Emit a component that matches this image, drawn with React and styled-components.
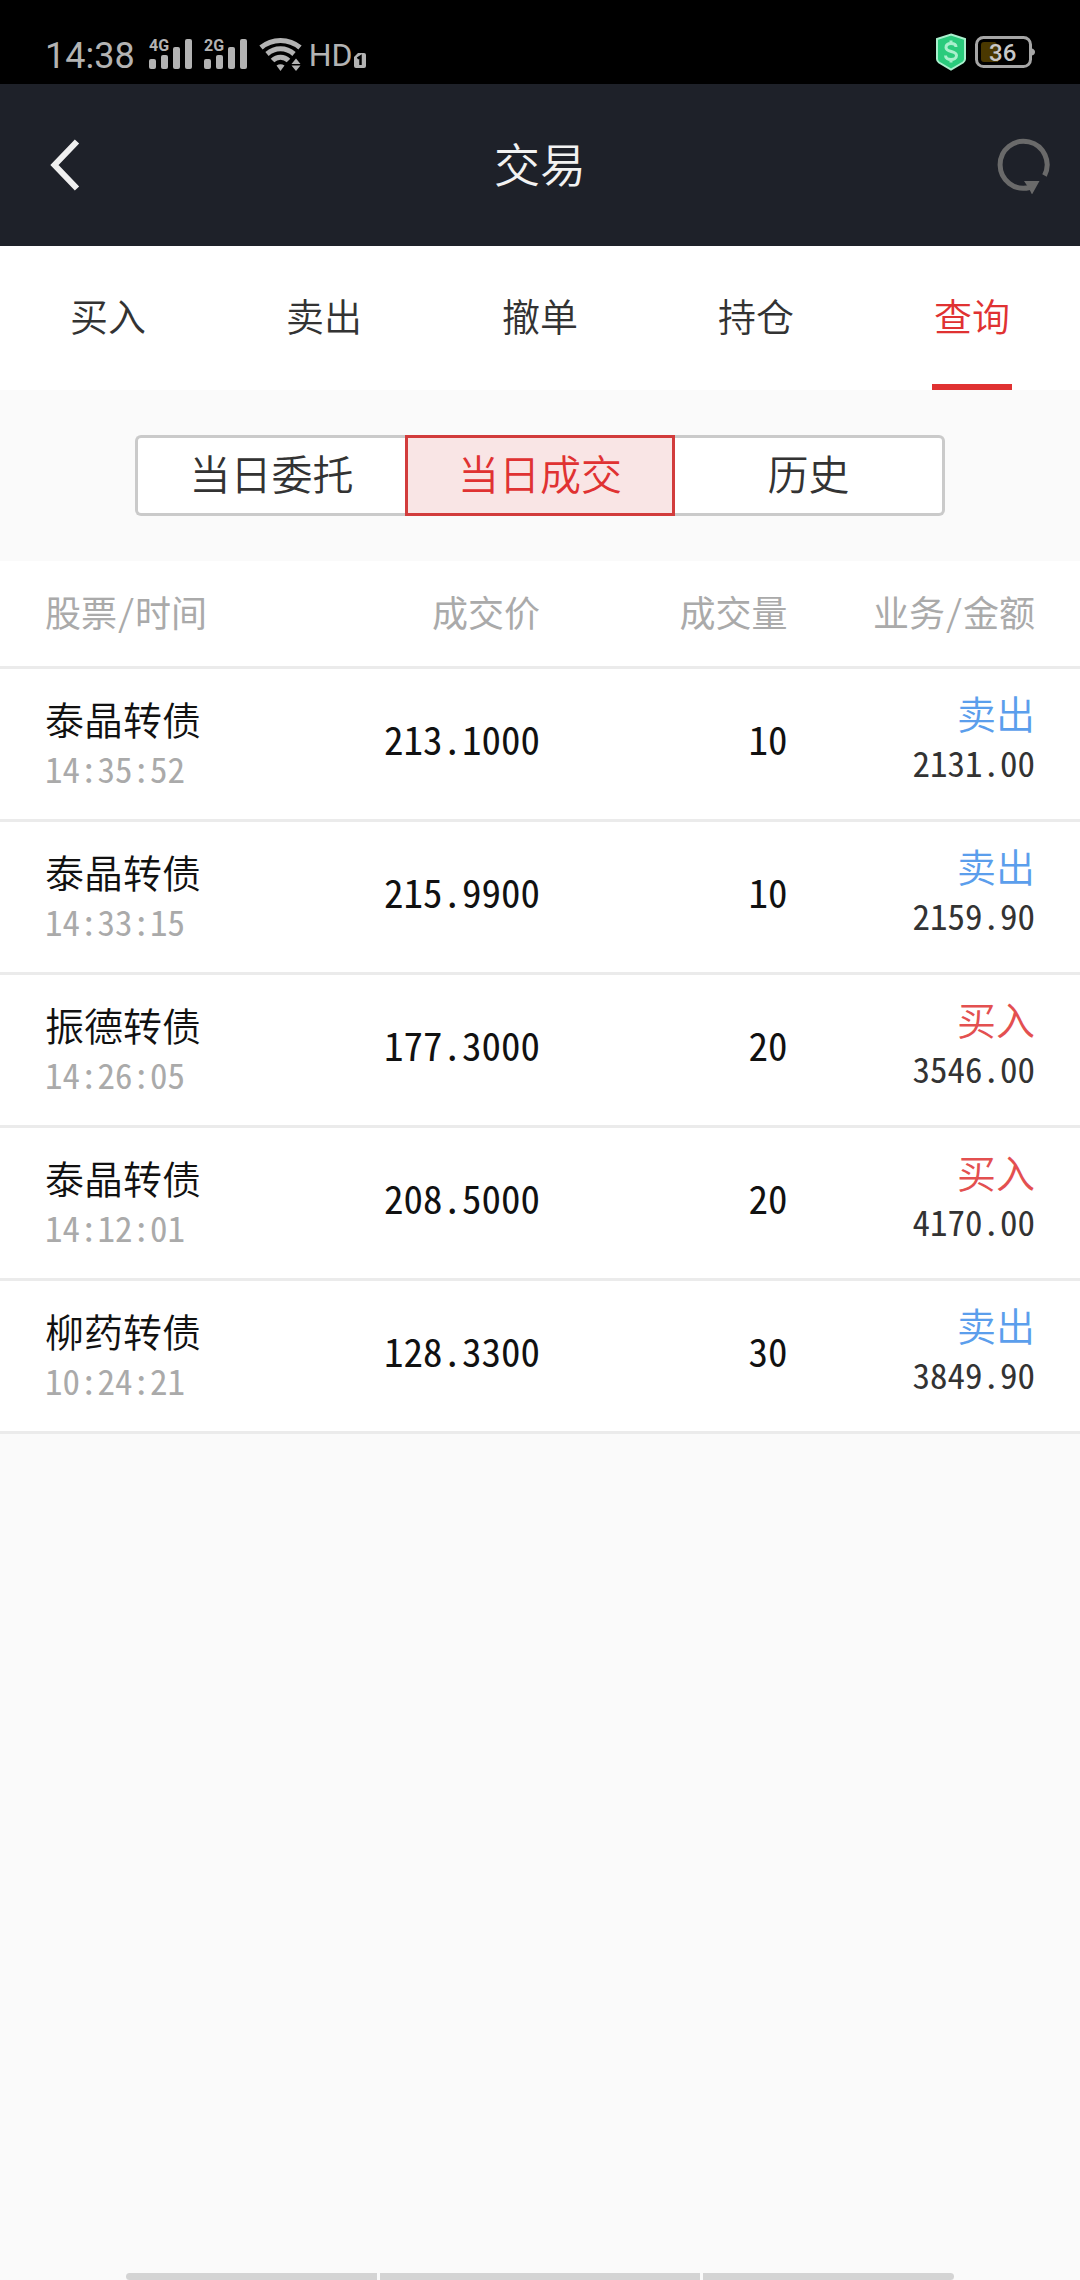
import React, { useState } from "react"
import styled, { createGlobalStyle } from "styled-components"

const tabs = ["买入", "卖出", "撤单", "持仓", "查询"]
const ranges = ["当日委托", "当日成交", "历史"]

const trades = [
  { name: "泰晶转债", time: "14:35:52", price: "213.1000", volume: 10, side: "卖出", amount: "2131.00" },
  { name: "泰晶转债", time: "14:33:15", price: "215.9900", volume: 10, side: "卖出", amount: "2159.90" },
  { name: "振德转债", time: "14:26:05", price: "177.3000", volume: 20, side: "买入", amount: "3546.00" },
  { name: "泰晶转债", time: "14:12:01", price: "208.5000", volume: 20, side: "买入", amount: "4170.00" },
  { name: "柳药转债", time: "10:24:21", price: "128.3300", volume: 30, side: "卖出", amount: "3849.90" }
]

const Signal = ({ label }) => (
  <svg width="44" height="34" viewBox="0 0 44 34" fill="#b3b3b3">
    <text x="0" y="14" fontFamily="Roboto, sans-serif" fontSize="16" fontWeight="700">{label}</text>
    <rect x="0" y="22" width="7" height="10" rx="2" />
    <rect x="12" y="18" width="7" height="14" rx="2" />
    <rect x="24" y="10" width="7" height="22" rx="2" />
    <rect x="36" y="2" width="7" height="30" rx="2" />
  </svg>
)

const Wifi = () => (
  <svg width="44" height="34" viewBox="0 0 44 34" fill="none" stroke="#b3b3b3" strokeWidth="5">
    <path d="M2 10.5C13 1 30 1 41 10.5" />
    <path d="M8 17C16 10 27 10 35 17" />
    <path d="M13.5 23.5C18 19 25 19 29.5 23.5" />
    <path d="M17.5 28.5Q21.5 26 25.5 28.5L21.5 34Z" fill="#b3b3b3" stroke="none" />
    <path d="M32.5 27L37 21.5L41.5 27ZM32.5 28.5H41.5L37 34Z" fill="#b3b3b3" stroke="none" />
  </svg>
)

const SimBadge = () => (
  <svg width="12" height="18" viewBox="0 0 12 18">
    <path d="M4 0H10Q12 0 12 2V13Q12 15 10 15H2Q0 15 0 13V4Z" fill="#b3b3b3" />
    <path d="M3.500 5.500L6.500 3.500V12" fill="none" stroke="#000" strokeWidth="2.500" />
  </svg>
)

const Shield = () => (
  <svg width="30" height="38" viewBox="0 0 30 38">
    <path d="M15 1.500L29 6V26Q29 28 27 29.500L15 36.500L3 29.500Q1 28 1 26V6Z" fill="#2acb7c" stroke="#a9f0cd" strokeWidth="2" />
    <path
      d="M20 14C20 11.500 18 10.500 15 10.500S10 12 10 14.500C10 20 20.500 17 20.500 22.500C20.500 25 18 26.500 15 26.500S9.500 25 9.500 22.500M15 7.500V11M15 26V29.500"
      fill="none"
      stroke="#a9f0cd"
      strokeWidth="3"
    />
  </svg>
)

const Battery = ({ level }) => (
  <svg width="60" height="34" viewBox="0 0 60 34">
    <rect x="1.500" y="2.500" width="54" height="29" rx="7" fill="none" stroke="#a6a6a6" strokeWidth="3" />
    <path d="M57 13.500Q60 14.500 60 17T57 20.500Z" fill="#a6a6a6" />
    <path d="M9 7H20Q23 9 23 12V27H9Q6 27 6 24V10Q6 7 9 7Z" fill="#4a3800" />
    <text x="14" y="26" fontFamily="Roboto, sans-serif" fontSize="24" fontWeight="500" fill="#c8c8c8">{level}</text>
  </svg>
)

const Back = () => (
  <svg width="30" height="52" viewBox="0 0 30 52" fill="none" stroke="#efefef" strokeWidth="6">
    <path d="M27 2.500L4.500 26L27 49.500" />
  </svg>
)

const Refresh = () => (
  <svg width="54" height="58" viewBox="0 0 54 58">
    <path d="M48.500 39.500A23.500 23.500 0 1 0 33.500 51.500" fill="none" stroke="#6a6a6a" strokeWidth="5" />
    <path d="M28 45H43.500L36 58.500L33 52.500Z" fill="#6a6a6a" />
  </svg>
)

const App = () => {
  const [tab, setTab] = useState("查询")
  const [range, setRange] = useState("当日成交")

  return (
    <Page>
      <GlobalStyle />
      <StatusBar>
        <Clock>14:38</Clock>
        <Signals>
          <Signal label="4G" />
          <Signal label="2G" />
          <Wifi />
        </Signals>
        <Volte>HD</Volte>
        <SimBadge />
        <Power>
          <Shield />
          <Battery level={36} />
        </Power>
      </StatusBar>

      <Header>
        <IconButton aria-label="返回"><Back /></IconButton>
        <h1>交易</h1>
        <IconButton aria-label="刷新"><Refresh /></IconButton>
      </Header>

      <Tabs>
        {tabs.map(name => (
          <Tab key={name} $active={name === tab} onClick={() => setTab(name)}>
            <span>{name}</span>
          </Tab>
        ))}
      </Tabs>

      <RangeBar>
        {ranges.map(name => (
          <RangeButton key={name} $active={name === range} onClick={() => setRange(name)}>
            {name}
          </RangeButton>
        ))}
      </RangeBar>

      <Table>
        <thead>
          <HeadRow>
            <th>股票/时间</th>
            <th>成交价</th>
            <th>成交量</th>
            <th>业务/金额</th>
          </HeadRow>
        </thead>
        <tbody>
          {trades.map(trade => (
            <Row key={trade.time}>
              <Stock>
                <p>{trade.name}</p>
                <Time>{trade.time}</Time>
              </Stock>
              <Figure>{trade.price}</Figure>
              <Figure>{trade.volume}</Figure>
              <Deal>
                <Side $sell={trade.side === "卖出"}>{trade.side}</Side>
                <Amount>{trade.amount}</Amount>
              </Deal>
            </Row>
          ))}
        </tbody>
      </Table>

      <GestureBar>
        <span />
        <span />
        <span />
      </GestureBar>
    </Page>
  )
}

export default App

const monoFont = `"Noto Sans Mono CJK SC", "Noto Sans CJK SC", sans-serif`

const GlobalStyle = createGlobalStyle`
  * {
    box-sizing: border-box;
  }

  body {
    margin: 0;
    background: #fafafa;
    font-family: "Noto Sans CJK SC", sans-serif;
    font-weight: 350;
  }

  h1, p {
    margin: 0;
    font-weight: inherit;
  }

  button {
    padding: 0;
    border: none;
    background: none;
    font: inherit;
    cursor: pointer;
  }

  svg {
    display: block;
  }
`

const Page = styled.div`
  display: flex;
  flex-direction: column;
  min-height: 100vh;
`

const StatusBar = styled.div`
  display: flex;
  align-items: flex-end;
  height: 84px;
  padding: 0 45px 13px 45px;
  background: #000;
  color: #b3b3b3;
  font-family: Roboto, sans-serif;
  font-weight: 400;
`

const Clock = styled.span`
  font-size: 36px;
  line-height: 30px;
`

const Signals = styled.div`
  display: flex;
  gap: 11px;
  margin-left: 14px;
`

const Volte = styled.span`
  margin: 0 2px 0 6px;
  font-family: "Liberation Sans Narrow", Roboto, sans-serif;
  font-size: 32px;
  line-height: 32px;
`

const Power = styled.div`
  display: flex;
  align-items: center;
  gap: 9px;
  margin-left: auto;
`

const Header = styled.header`
  display: grid;
  grid-template-columns: 1fr auto 1fr;
  align-items: center;
  height: 162px;
  padding: 0 30px;
  background: #1e2129;
  color: #f2f2f2;

  h1 {
    padding-bottom: 6px;
    font-size: 46px;
    line-height: 60px;
  }
`

const IconButton = styled.button`
  display: flex;
  padding: 0 20px;

  &:last-child {
    justify-self: end;
    padding: 0;
  }
`

const Tabs = styled.nav`
  display: flex;
  background: #fff;
`

const Tab = styled.button`
  flex: 1;
  display: flex;
  justify-content: center;
  color: ${props => props.$active ? "#e03232" : "#333"};
  font-size: 38px;
  line-height: 138px;

  span {
    min-width: 80px;
    border-bottom: 6px solid ${props => props.$active ? "#e03232" : "transparent"};
  }
`

const RangeBar = styled.div`
  display: grid;
  grid-template-columns: repeat(3, 1fr);
  width: 75%;
  margin: 45px auto;
`

const RangeButton = styled.button`
  height: 81px;
  padding-bottom: 8px;
  border: 3px solid ${props => props.$active ? "#d23c3c" : "#cacaca"};
  background: ${props => props.$active ? "#f9e5e5" : "#fff"};
  color: ${props => props.$active ? "#e03232" : "#333"};
  font-size: 41px;
  line-height: 60px;

  &:first-child {
    border-right-width: ${props => props.$active ? "3px" : "0"};
    border-radius: 6px 0 0 6px;
  }

  &:last-child {
    border-left-width: ${props => props.$active ? "3px" : "0"};
    border-radius: 0 6px 6px 0;
  }
`

const Table = styled.table`
  display: block;
  background: #fff;

  thead, tbody {
    display: block;
  }

  th, td {
    padding: 0;
  }
`

const HeadRow = styled.tr`
  display: grid;
  grid-template-columns: repeat(4, 1fr);
  padding: 0 45px 4px;
  border-bottom: 3px solid #ebebeb;
  color: #aaa;
  font-family: ${monoFont};
  font-size: 36px;
  line-height: 101px;

  th {
    font-weight: inherit;
    text-align: right;
    white-space: nowrap;
  }

  th:first-child {
    text-align: left;
  }
`

const Row = styled.tr`
  display: grid;
  grid-template-columns: repeat(4, 1fr);
  height: 153px;
  padding: 0 45px;
  border-bottom: 3px solid #ebebeb;
  color: #111;
  font-size: 39px;
  line-height: 50px;
  text-align: right;
`

const Stock = styled.td`
  && {
    padding-top: 24px;
  }
  text-align: left;
`

const Time = styled.p`
  color: #aaa;
  font-family: ${monoFont};
  font-size: 35px;
`

const Figure = styled.td`
  && {
    padding-top: 44px;
  }
  font-family: ${monoFont};
`

const Deal = styled.td`
  && {
    padding-top: 18px;
  }
`

const Side = styled.p`
  color: ${props => props.$sell ? "#5b9eec" : "#e35050"};
`

const Amount = styled.p`
  color: #333;
  font-family: ${monoFont};
  font-size: 35px;
`

const GestureBar = styled.div`
  display: grid;
  grid-template-columns: 25fr 32fr 25fr;
  gap: 3px;
  height: 7px;
  margin: auto 126px 0;

  span {
    background: #d4d4d4;
  }

  span:first-child {
    border-radius: 4px 0 0 4px;
  }

  span:last-child {
    border-radius: 0 4px 4px 0;
  }
`
